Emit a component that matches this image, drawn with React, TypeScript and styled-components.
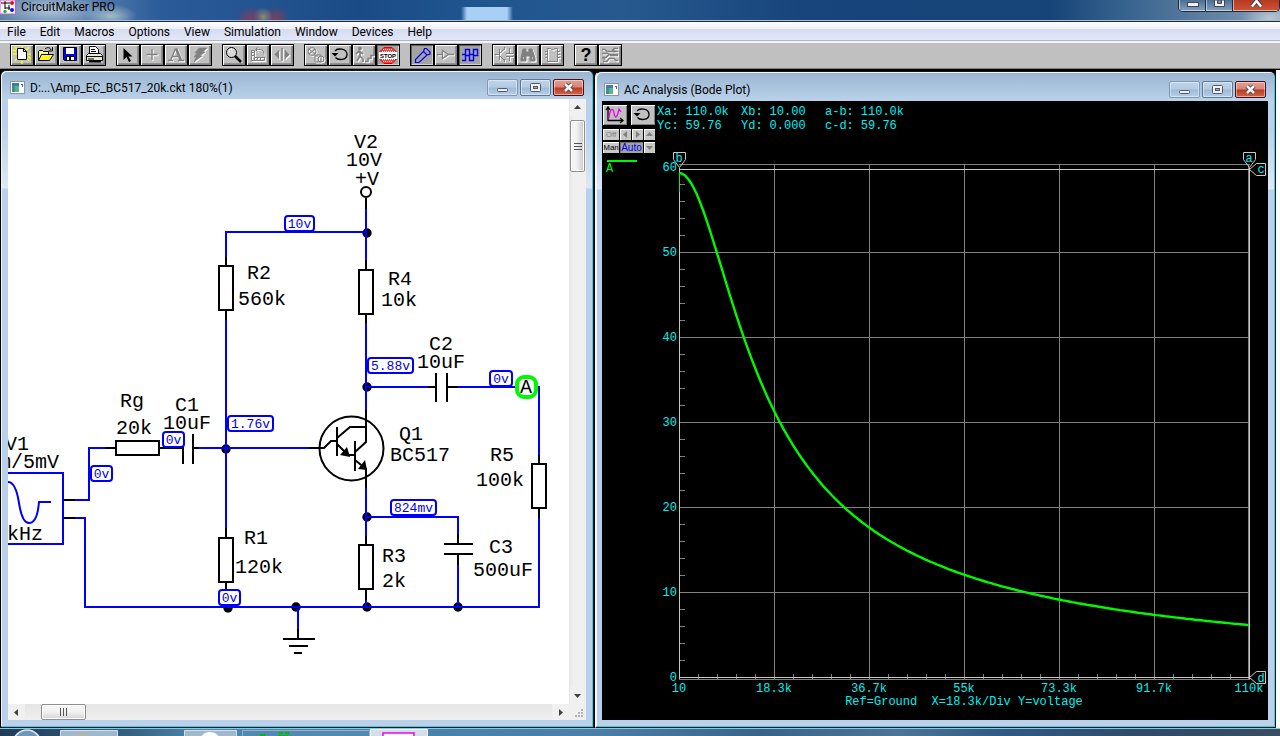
import React from "react";
import styled, { createGlobalStyle, css } from "styled-components";

const Global = createGlobalStyle`
  *, *::before, *::after { box-sizing: border-box; }
  html, body { margin: 0; padding: 0; }
  body { background: #fff; font-family: Roboto, "Open Sans", sans-serif; color: #000; overflow: hidden; }
  button { font: inherit; color: inherit; margin: 0; padding: 0; }
  svg { display: block; }
`;

const mono = `"Liberation Mono", monospace`;

const Shell = styled.div`
  min-height: 100vh;
  display: flex;
  flex-direction: column;
`;

/* ---------- application title bar ---------- */

const TitleBar = styled.header`
  height: 22px;
  display: flex;
  align-items: flex-start;
  border-bottom: 1px solid #1d2c45;
  box-shadow: inset 0 -1px 0 #a9bcd4;
  background:
    radial-gradient(ellipse 14px 12px at 250px 18px, #8c3b55cc, #8c3b5500),
    radial-gradient(ellipse 10px 10px at 263px 17px, #a59a6dcc, #a59a6d00),
    radial-gradient(ellipse 14px 12px at 276px 18px, #8c3b55cc, #8c3b5500),
    linear-gradient(90deg, #a3cdf200 461px, #a8cff4 467px, #a8cff4 507px, #a3cdf200 513px) 0 7px no-repeat,
    radial-gradient(ellipse 26px 12px at 111px 16px, #b9cfcfcc, #b9cfcf00),
    radial-gradient(ellipse 60px 20px at 50px 10px, #b6c9deee, #9db5d100),
    radial-gradient(ellipse 30px 14px at calc(100% - 10px) 18px, #c4d3dccc, #c4d3dc00),
    linear-gradient(90deg, #56799f 0, #4a74a8 110px, #2b5c99 160px, #1b4b87 360px, #1f558f 470px, #27598f 620px, #17457c 800px, #174478 1050px, #34618d 1120px, #8299b3 100%);
`;

const AppIcon = styled.span`
  width: 16px;
  height: 14px;
  overflow: hidden;
`;

const AppName = styled.h1`
  flex: 1;
  margin: 0 0 0 5px;
  font-size: 12px;
  line-height: 14px;
  font-weight: 400;
`;

const AppButtons = styled.div`
  display: flex;
  height: 12px;
  border: 1px solid #1c2a3c;
  border-top: 0;
  border-radius: 0 0 5px 5px;
  overflow: hidden;
`;

const AppButton = styled.button<{ $close?: boolean }>`
  width: ${(p) => (p.$close ? 46 : 27)}px;
  height: 11px;
  display: flex;
  justify-content: center;
  border: 0;
  border-right: ${(p) => (p.$close ? "0" : "1px solid #1c2a3c")};
  box-shadow: inset 1px -1px 0 #ffffff88;
  background: ${(p) => (p.$close ? "linear-gradient(#b53a22, #cf5334)" : "linear-gradient(#4b6e94, #84a0bd)")};
`;

/* ---------- menu and toolbar ---------- */

const MenuBar = styled.nav`
  height: 19px;
  display: flex;
  background: linear-gradient(#fff, #eceff8 7px, #d6dcf0 7px, #e2e7f7);
  border-bottom: 1px solid #aeb6cc;
`;

const MenuItem = styled.button`
  border: 0;
  background: none;
  padding: 1px 7px 0;
  font-size: 12px;
  line-height: 18px;
`;

const ToolBar = styled.div`
  height: 29px;
  display: flex;
  gap: 10px;
  padding: 1px 10px 0;
  border-top: 2px solid #f4f4f6;
  border-bottom: 1px solid #000;
  box-shadow: inset 0 -1px 0 #808080;
  background: #c0c0c0;
`;

const ToolGroup = styled.div`
  display: flex;
`;

const pressedLook = css`
  background: #a3a3a3;
  box-shadow: inset 1px 1px 0 #606060, inset -1px -1px 0 #d0d0d0;
`;

const ToolButton = styled.button<{ $pressed?: boolean }>`
  width: 24px;
  height: 22px;
  border: 1px solid #000;
  background: #c0c0c0;
  box-shadow: inset 1px 1px 0 #fff, inset -1px -1px 0 #808080, inset -2px -2px 0 #909090;
  ${(p) => p.$pressed && pressedLook}
`;

/* ---------- child windows ---------- */

const Workspace = styled.main`
  flex: 1;
  display: grid;
  grid-template-columns: 594fr 681fr;
  gap: 1px;
  border-right: 4px solid #fff;
  background: #000;
`;

const Frame = styled.section<{ $lower?: boolean }>`
  display: flex;
  flex-direction: column;
  min-width: 0;
  margin-top: ${(p) => (p.$lower ? 1 : 0)}px;
  padding: 0 7px 7px ${(p) => (p.$lower ? 6 : 7)}px;
  border: 1px solid #12161c;
  border-left-color: ${(p) => (p.$lower ? "#fff" : "#000")};
  border-radius: 6px 6px 0 0;
  box-shadow: inset -1px -1px 0 #35d0e6, inset 1px 1px 0 #f2f7fc;
  background: linear-gradient(#9ab5d1, #b9d1ea 28px, #b9d1ea 56px, #dde8f5 117px, #b9d1ea 118px);
`;

const FrameTitle = styled.header<{ $lower?: boolean }>`
  height: ${(p) => (p.$lower ? 29 : 28)}px;
  display: flex;
  align-items: center;
  gap: 2px;
  padding: ${(p) => (p.$lower ? 6 : 5)}px 2px 0;
`;

const FrameName = styled.h2`
  flex: 1;
  margin: 0 0 0 3px;
  font-size: 12px;
  line-height: 16px;
  font-weight: 400;
`;

const FrameButton = styled.button<{ $kind: string }>`
  width: 31px;
  height: 17px;
  display: grid;
  place-items: center;
  border-radius: 2px;
  border: 1px solid ${(p) => (p.$kind === "Close" ? "#48121a" : p.$kind === "Minimize" ? "#7f97b3" : "#5c7693")};
  box-shadow: inset 0 0 0 1px #ffffff70;
  background: ${(p) =>
    p.$kind === "Close"
      ? "linear-gradient(#e3a094, #d98475 7px, #b93b21 8px, #d0694f)"
      : "linear-gradient(#bfd3e8, #b5cbe3 7px, #9fbad6 8px, #b6cee8)"};
`;

const Client = styled.div`
  flex: 1;
  display: grid;
  grid-template: minmax(0, 1fr) 16px / minmax(0, 1fr) 17px;
  background: #fff;
`;

const Canvas = styled.div`
  overflow: hidden;
`;

const ScrollBar = styled.div<{ $across?: boolean }>`
  display: flex;
  flex-direction: ${(p) => (p.$across ? "row" : "column")};
  align-items: stretch;
  padding: ${(p) => (p.$across ? "0" : "0 1px")};
  background: ${(p) => (p.$across ? "linear-gradient(#e4e4e4, #f0f0f0)" : "linear-gradient(90deg, #e4e4e4, #f0f0f0 4px)")};
`;

const ScrollArrow = styled.button<{ $across?: boolean }>`
  width: ${(p) => (p.$across ? "17px" : "auto")};
  height: ${(p) => (p.$across ? "auto" : "17px")};
  display: grid;
  place-items: center;
  border: 0;
  background: #f0f0f0;
`;

const Thumb = styled.div<{ $across?: boolean }>`
  display: grid;
  place-items: center;
  border: 1px solid #8f8f8f;
  border-radius: 2px;
  box-shadow: inset 0 0 0 1px #fff;
  ${(p) =>
    p.$across
      ? css`width: 45px; margin-left: 16px; background: linear-gradient(#f4f4f4 45%, #d4d4d8);`
      : css`height: 52px; margin-top: 4px; background: linear-gradient(90deg, #f4f4f4 40%, #c9c9cf);`}
`;

const Spacer = styled.div`
  flex: 1;
`;

const GripCorner = styled.div`
  display: flex;
  align-items: flex-end;
  justify-content: flex-end;
  padding: 2px;
  background: #f0f0f0;
`;

/* ---------- plot window ---------- */

const PlotClient = styled.div`
  flex: 1;
  display: flex;
  flex-direction: column;
  background: #000;
`;

const PlotHeader = styled.div`
  height: 51px;
  display: flex;
  gap: 2px;
  padding: 4px 0 0 1px;
`;

const PlotControls = styled.div`
  width: 52px;
  display: flex;
  flex-direction: column;
  gap: 2px;
`;

const ControlRow = styled.div<{ $main?: boolean }>`
  display: flex;
  justify-content: space-between;
  margin-bottom: ${(p) => (p.$main ? 2 : 0)}px;
`;

const BigButton = styled.button`
  width: 24px;
  height: 20px;
  border: 0;
  background: #c0c0c0;
  box-shadow: inset 1px 1px 0 #fff, inset -1px -1px 0 #808080;
`;

const SmallButton = styled.button<{ $w: number; $tone?: string }>`
  width: ${(p) => p.$w}px;
  height: 11px;
  display: flex;
  align-items: center;
  justify-content: center;
  border: 0;
  overflow: hidden;
  background: ${(p) => (p.$tone === "on" ? "#a3a3a3" : "#c8c8c8")};
  box-shadow: inset 1px 1px 0 ${(p) => (p.$tone === "on" ? "#707070" : "#fff")};
  color: ${(p) => (p.$tone === "on" ? "#0000f0" : p.$tone === "off" ? "#808080" : "#000")};
  font-family: "Liberation Sans", sans-serif;
  font-size: ${(p) => (p.$tone === "on" ? 10 : 8)}px;
  line-height: 11px;
`;

const Readouts = styled.dl`
  display: grid;
  grid-template-columns: repeat(3, 84px);
  grid-auto-rows: 14px;
  margin: 0;
  color: #00f0f0;
  font-family: ${mono};
  font-size: 12px;
  line-height: 14px;
`;

const Readout = styled.div`
  display: flex;
  gap: 7px;
  dt, dd { margin: 0; }
`;

const PlotArea = styled.div`
  flex: 1;
  svg { width: 100%; height: auto; }
`;

const PlotText = styled.text<{ $trace?: boolean }>`
  font-family: ${mono};
  font-size: 12px;
  fill: ${(p) => (p.$trace ? "#00f800" : "#00f0f0")};
`;

/* ---------- schematic text ---------- */

const PartText = styled.text`
  font-family: ${mono};
  font-size: 20px;
  fill: #000;
`;

const TagText = styled.text`
  font-family: ${mono};
  font-size: 13px;
  fill: #0000f8;
`;

/* ---------- taskbar ---------- */

const TaskBar = styled.footer`
  height: 8px;
  overflow: hidden;
  border-top: 1px solid #a4bdd2;
  background: linear-gradient(90deg, #1f3b57, #35617f 130px, #4d87ad 200px, #4683ab 350px, #4a7fa8 600px, #386389 760px, #4c7496 900px, #2f5a85 1000px, #2f4a68 1150px, #394d62);
`;

/* ---------- icons ---------- */

const G = "#808080";

/* Disabled tools show a white copy one pixel down and right of the grey drawing. */
const Etched = ({ children }: { children: React.ReactNode }) => (
  <>
    <g transform="translate(1 1)" stroke="#fff" color="#fff" fill="none">{children}</g>
    <g stroke={G} color={G} fill="none">{children}</g>
  </>
);

const icons: Record<string, React.ReactNode> = {
  New: (
    <>
      <path d="M11 0v3M4 2l3 3M18 2l-3 3M2 9h4M16 9h4M4 16l3-3M18 16l-3-3M11 16v3M2 5l3 1M20 13l-3-1" stroke="#ffff00" strokeWidth="1.6" />
      <path d="M6.500 3.500h6l3 3v8h-9z" fill="#fff" stroke="#000" />
      <path d="M12.500 3.500v3h3" fill="none" stroke="#000" />
    </>
  ),
  Open: (
    <>
      <path d="M3.500 15.500v-9l1-1h3l1 1h5v3" fill="#ffff80" stroke="#000" />
      <path d="M3.500 15.500l3-6h12l-4 6z" fill="#ffff00" stroke="#000" />
      <path d="M10 4c2-2 5-2 6 1M17.500 2v4h-4" fill="none" stroke="#000" />
    </>
  ),
  Save: (
    <>
      <path d="M4.500 2.500h13v13h-12l-1-1z" fill="#0000e0" stroke="#000" />
      <path d="M7 3h8v6H7z" fill="#fff" />
      <path d="M7 11h8v5H7z" fill="#000" /><path d="M8 12h2v3H8zM12 12h3v3h-3z" fill="#fff" />
    </>
  ),
  Print: (
    <>
      <path d="M6.500 9.500v-8h6l3 3v5z" fill="#fff" stroke="#000" />
      <path d="M8 4.500h4M8 6.500h5" stroke="#000" />
      <path d="M3.500 10.500l2-2h12l2 2v5h-16z" fill="#e8e8e8" stroke="#000" />
      <path d="M4 11.500h15M5 14h6" stroke="#000" /><path d="M4 12.500h14" stroke="#ffff00" />
      <path d="M6 16.500h12" stroke="#000" strokeWidth="2" />
    </>
  ),
  Select: <path d="M6.500 3v12l3-3 2.500 5 2-1-2.500-4.500h4z" fill="#000" />,
  Wire: <Etched><path d="M11 4v11M5.500 9.500h11" strokeWidth="1.300" /></Etched>,
  Text: (
    <Etched>
      <path d="M3 15.500h5M13 15.500h6M5.500 15.500L10.500 3.500M7.500 11.500h6" strokeWidth="1.300" />
      <path d="M11 3.500L16 15.500" strokeWidth="2.600" />
    </Etched>
  ),
  Delete: <Etched><path d="M10 3h8l-4 4h2l-5 4h2l-8 6 2-5H5l3-4H6z" fill="currentColor" strokeWidth="0.500" /></Etched>,
  Zoom: (
    <>
      <circle cx="8.500" cy="7.500" r="5" fill="#d8d8d8" stroke="#000" />
      <path d="M6 7c0-2 1-3 3-3" fill="none" stroke="#fff" /><path d="M12 11l6 6" stroke="#000" strokeWidth="2.500" />
    </>
  ),
  Rotate: (
    <Etched>
      <path d="M4.500 15.500v-10h3v10zM4.500 15.500h13v-3h-10M4 7.500h3M4 10.500h3M10.500 12v3M13.500 12v3M9 4.500h4c3 0 4 2 4 5M10.500 2.500l-2 2 2 2" />
    </Etched>
  ),
  Mirror: <Etched><path d="M11 3v13" strokeWidth="1.500" /><path d="M8 5v9L3.500 9.500zM14 5v9l4.500-4.500z" fill="currentColor" strokeWidth=".3" /></Etched>,
  Probes: (
    <Etched>
      <circle cx="7" cy="6.500" r="4" /><path d="M4 4l6 5M4 9l6-5M10 10h6v7h-6zM10 11h3" /><circle cx="16" cy="14" r="3" />
    </Etched>
  ),
  Reset: (
    <>
      <path d="M6 6c2-3 12-3 12 3.500 0 6-9 6-11.500 3" fill="none" stroke="#000" strokeWidth="1.300" />
      <path d="M2.500 8h7L6 11.500z" fill="#000" />
    </>
  ),
  Step: (
    <Etched>
      <circle cx="7" cy="3.500" r="1.500" fill="currentColor" />
      <path d="M7 6v5l3 3v3M7 11l-3 5M3 9l3-3 4 3M12 16.500h3v-3h3v-3h3" strokeWidth="1.600" />
    </Etched>
  ),
  Stop: (
    <>
      <path d="M7 2.500h8l4.500 4.500v7l-4.500 4.500H7L2.500 14V7z" fill="#f04040" stroke="#e00000" />
      <path d="M6 4.500h10M5 6.500h13M5 14.500h13M6 16.500h10" stroke="#fff" strokeDasharray="1 1" />
      <path d="M2 7h18v7H2z" fill="#fff" />
      <text x="11" y="13" textAnchor="middle" fontFamily="Liberation Sans, sans-serif" fontWeight="700" fontSize="6">STOP</text>
    </>
  ),
  Probe: <path d="M4.500 17.500v-3l8-8 1-3h2l3.500 3.500v2l-3 1-8 7.500zM12.500 6.500l3.500 3.500" fill="none" stroke="#0000f0" strokeWidth="1.200" />,
  Logic: <Etched><path d="M2 9.500h5M14 9.500h5M7.500 5.500v8l6-4z" strokeWidth="1.300" /></Etched>,
  Waves: (
    <path
      d="M3 9.500h3.500v-5h4v5h4v-5h4v5M3 15.500h3.500v-5h4v5h4v-5h5"
      fill="none" stroke="#0000f0" strokeWidth="1.400"
    />
  ),
  Parts: <Etched><path d="M2 9.500h4M6.500 4v11M7 8l4-4M7 11l4 4M11.500 2v3M11.500 14v3M13 8.500h7M13 11.500h7M16.500 3v5M16.500 12v4" /></Etched>,
  Find: (
    <Etched>
      <path d="M6 4h3v3h3V4h3l3 9v3h-5v-5H9v5H4v-3z" fill="currentColor" /><path d="M6 13h1M15 13h1" stroke="#fff" />
    </Etched>
  ),
  Chip: <Etched><path d="M6.500 3.500h3l1 1h2l1-1h3v13h-10zM4 6.500h2M4 9.500h2M4 12.500h2M17 6.500h2M17 9.500h2M17 12.500h2" /></Etched>,
  Help: (
    <text x="11" y="16" textAnchor="middle" fontFamily="Liberation Sans, sans-serif" fontWeight="700" fontSize="18">?</text>
  ),
  Board: (
    <Etched>
      <path d="M3 4.500h3l2 2h5l2-3h4M3 8.500h6l3 2h7M3 12.500h4l3-3h9M4 16.500h4l2-3h5l2 2h2M13 6.500h6" strokeWidth="1.500" />
      <circle cx="5" cy="14" r="1" /><circle cx="15" cy="6" r="1" />
    </Etched>
  ),
};

const toolGroups: string[][] = [
  ["New", "Open", "Save", "Print"],
  ["Select", "Wire", "Text", "Delete"],
  ["Zoom", "Rotate", "Mirror"],
  ["Probes", "Reset", "Step", "Stop"],
  ["Probe", "Logic", "Waves"],
  ["Parts", "Find", "Chip"],
  ["Help", "Board"],
];
const pressed = ["Stop", "Probe", "Waves"];

const ToolIcon = ({ name }: { name: string }) => (
  <svg width="22" height="20" viewBox="0 0 22 20">{icons[name]}</svg>
);

const WindowGlyph = ({ kind }: { kind: string }) => (
  <svg width="13" height="11" viewBox="0 0 13 11">
    {kind === "Minimize" && <rect x="1.500" y="6.500" width="10" height="3" rx="1" fill="#eee" stroke="#50586a" />}
    {kind === "Restore" && (
      <>
        <rect x="1.500" y="1.500" width="10" height="8" rx="1" fill="#f2f2f2" stroke="#50586a" />
        <rect x="4.500" y="4.500" width="4" height="2" fill="#8fb0d4" stroke="#50586a" />
      </>
    )}
    {kind === "Close" && (
      <>
        <path d="M3 2l7 7M10 2L3 9" stroke="#50434e" strokeWidth="4.500" />
        <path d="M3 2l7 7M10 2L3 9" stroke="#f4f4f4" strokeWidth="2.500" />
      </>
    )}
  </svg>
);

const DocIcon = () => (
  <svg width="15" height="13" viewBox="0 0 15 13" aria-hidden="true">
    <rect x=".5" y=".5" width="14" height="12" fill="#fff" stroke="#8b95a3" />
    <path d="M2 2h7v9H2z" fill="#3f8f8c" /><path d="M5 5h4v6H5z" fill="#57b58a" />
    <path d="M2 2h7v3H2z" fill="#4779a8" /><path d="M11 3.500h2M12.500 3v3" stroke="#3c6ba5" />
  </svg>
);

const frameKinds = ["Minimize", "Restore", "Close"];

const FrameHeader = ({ title, lower }: { title: string; lower?: boolean }) => (
  <FrameTitle $lower={lower}>
    <DocIcon />
    <FrameName>{title}</FrameName>
    {frameKinds.map((k) => (
      <FrameButton key={k} $kind={k} aria-label={k}><WindowGlyph kind={k} /></FrameButton>
    ))}
  </FrameTitle>
);

/* ---------- schematic ---------- */

const partLabels: [number, number, string][] = [
  [354, 148, "V2"], [346, 166, "10V"], [355, 185, "+V"],
  [247, 279, "R2"], [238, 305, "560k"], [388, 285, "R4"], [381, 306, "10k"],
  [429, 350, "C2"], [417, 368, "10uF"], [120, 407, "Rg"], [116, 434, "20k"],
  [175, 411, "C1"], [163, 429, "10uF"], [399, 440, "Q1"], [390, 461, "BC517"],
  [490, 461, "R5"], [476, 486, "100k"], [244, 544, "R1"], [235, 573, "120k"],
  [382, 562, "R3"], [382, 587, "2k"], [489, 553, "C3"], [473, 576, "500uF"],
  [5, 450, "V1"], [-1, 468, "m/5mV"], [7, 540, "kHz"],
];

const tags: [number, number, number, string][] = [
  [285, 216, 29, "10v"], [368, 358, 45, "5.88v"], [490, 371, 22, "0v"],
  [228, 416, 45, "1.76v"], [163, 432, 21, "0v"], [91, 466, 21, "0v"],
  [391, 500, 45, "824mv"], [219, 590, 21, "0v"],
];

const dots = [[367, 233], [367, 387], [226, 449], [367, 517], [228, 608], [296, 607], [367, 607], [458, 607]];
const tallResistors = [[219, 266], [359, 270], [532, 464], [219, 538], [359, 545]];

const Schematic = () => (
  <svg width="561" height="605" viewBox="8 99 561 605" role="img" aria-label="Amplifier schematic">
    <g fill="#000">{dots.map(([x, y]) => <circle key={`${x}-${y}`} cx={x} cy={y} r="4.700" />)}</g>
    <g fill="none" stroke="#0000f8" strokeWidth="2">
      <path d="M226 257V232H366M366 209V260M366 323V410M226 320V528M367 387H428M458 387H539V455M539 518V607H85V518H75" />
      <path d="M75 500H89V448H105M199 448H309M366 488V536M367 517H458V534M458 565V607M366 600V607M298 608V629" />
      <path d="M0 473H63V544H0M8 482C14 482 17 490 19 503C21 516 24 523 29 523C35 523 38 514 39 502H51" />
    </g>
    <g fill="none" stroke="#000" strokeWidth="2">
      <path d="M226 257V265M226 311V320M366 198V209M366 260V269M366 313V323M226 528V537M226 581V590M366 536V544M366 589V600M539 455V463M539 508V518" />
      <path d="M64 500H75M64 518H75M105 448H115M160 448H183M183 434V464M193 434V464M193 448H199M428 387H436M436 373V402M447 373V402M447 387H458" />
      <path d="M458 534V544M444 544H473M444 554H473M458 554V565M298 629V639M283 639H315M289 646H308M294 653H302" />
      <circle cx="366" cy="192" r="5" fill="#fff" />
      <circle cx="351.500" cy="448.500" r="32" />
      <path d="M309 448H324L331 441H337M337 427V456M337 438L350 427H366M337 444L348 455H355M355 441V471M355 452L366 442V410M355 460L366 469V488" />
      {tallResistors.map(([x, y]) => <rect key={`${x}-${y}`} x={x} y={y} width="14" height="44" fill="#fff" />)}
      <rect x="116" y="441" width="43" height="14" fill="#fff" />
    </g>
    <path d="M350 457L340 455L347 447ZM367 470L358 469L365 460Z" fill="#000" />
    {tags.map(([x, y, w, t]) => (
      <g key={`${x}-${y}`}>
        <rect x={x} y={y} width={w} height="15" rx="3" fill="#fff" stroke="#0000f8" strokeWidth="2" />
        <TagText x={x + w / 2} y={y + 12} textAnchor="middle">{t}</TagText>
      </g>
    ))}
    <rect x="517" y="377" width="19" height="20" rx="7" fill="#fff" stroke="#00f800" strokeWidth="4" />
    <PartText x="526" y="393" textAnchor="middle">A</PartText>
    {partLabels.map(([x, y, t]) => <PartText key={`${x}-${y}`} x={x} y={y}>{t}</PartText>)}
  </svg>
);

/* ---------- Bode plot ---------- */

const X0 = 679, X1 = 1249, Y0 = 677, PER_VOLT = 8.5, CORNER = 11.4;
const curve = Array.from({ length: 191 }, (_, i) => {
  const f = (i / 190) * 110;
  const volts = 59.3 / Math.sqrt(1 + (f / CORNER) ** 2);
  return `${i ? "L" : "M"}${(X0 + (i / 190) * (X1 - X0)).toFixed(1)} ${(Y0 - volts * PER_VOLT).toFixed(1)}`;
}).join("");

const xLabels = ["10", "18.3k", "36.7k", "55k", "73.3k", "91.7k", "110k"];
const readouts = [
  ["Xa:", "110.0k"], ["Xb:", "10.00"], ["a-b:", "110.0k"],
  ["Yc:", "59.76"], ["Yd:", "0.000"], ["c-d:", "59.76"],
];

const BodePlot = () => (
  <svg viewBox="602 152 666 568" role="img" aria-label="Bode plot of output A" shapeRendering="crispEdges">
    <g stroke="#808080" fill="none">
      {[1, 2, 3, 4, 5].map((i) => (
        <path key={i} d={`M${X0 + i * 95 + 0.5} 164V679M${X0} ${Y0 - i * 85 + 0.5}H${X1}`} />
      ))}
      {Array.from({ length: 30 }, (_, i) => (
        <path key={i} d={`M${X0} ${Y0 - i * 17 + 0.5}h6M${X0 + i * 19 + 0.5} 674v5`} />
      ))}
      <path d="M679 164.500H1250M679 679.500H1250M1248.500 164V679" />
    </g>
    <path d="M679.500 168V679M679 169.500H1249M679 677.500H1249M1249.500 168V679" stroke="#c8c8c8" fill="none" />
    <g stroke="#c8c8c8" fill="none" shapeRendering="auto">
      <path d="M673.500 152.500h12v7l-6 8-6-8zM1243.500 152.500h12v7l-6 8-6-8zM1249.500 169.500l7-6h9v12h-9zM1249.500 677.500l7-6h9v12h-9z" />
    </g>
    <path d="M679.500 174v18" stroke="#00f800" />
    <path d={curve} fill="none" stroke="#00f800" strokeWidth="2.400" shapeRendering="auto" />
    <path d="M607 161h30" stroke="#00f800" strokeWidth="2" />
    <PlotText x="606" y="172" $trace>A</PlotText>
    {[0, 10, 20, 30, 40, 50, 60].map((v) => (
      <PlotText key={v} x="677" y={Y0 + 4 - v * PER_VOLT} textAnchor="end">{v}</PlotText>
    ))}
    {xLabels.map((t, i) => <PlotText key={t} x={X0 + i * 95} y="692" textAnchor="middle">{t}</PlotText>)}
    <PlotText x="964" y="705" textAnchor="middle">{"Ref=Ground\u00a0 X=18.3k/Div Y=voltage"}</PlotText>
    <PlotText x="679" y="162" textAnchor="middle">b</PlotText>
    <PlotText x="1249" y="162" textAnchor="middle">a</PlotText>
    <PlotText x="1261" y="173" textAnchor="middle">c</PlotText>
    <PlotText x="1261" y="682" textAnchor="middle">d</PlotText>
  </svg>
);

const Arrow = ({ d, size = 9, fill = "#404040" }: { d: string; size?: number; fill?: string }) => (
  <svg width={size} height={size} viewBox="0 0 9 9"><path d={d} fill={fill} /></svg>
);
const LEFT = "M6 1v7L2 4.500z", RIGHT = "M3 1v7l4-3.500z", UP = "M1 6h7L4.500 2z", DOWN = "M1 3h7L4.500 7z";

const menus = ["File", "Edit", "Macros", "Options", "View", "Simulation", "Window", "Devices", "Help"];

export default function App() {
  return (
    <Shell>
      <Global />
      <TitleBar>
        <AppIcon>
          <svg width="16" height="16" viewBox="0 0 16 16">
            <path d="M0 0h15.500v14H0z" fill="#fff" stroke="#f040f0" />
            <path d="M1 3h4M5 1v8M5 3h5M5 8h5M9 5v5" stroke="#000" fill="none" />
            <circle cx="12" cy="3" r="2" fill="#e01010" /><circle cx="12" cy="10" r="2" fill="#1010e0" />
            <circle cx="5" cy="11.500" r="1.700" fill="#10c010" />
          </svg>
        </AppIcon>
        <AppName>CircuitMaker PRO</AppName>
        <AppButtons>
          <AppButton aria-label="Minimize">
            <svg width="13" height="8"><rect x="1.500" y="2.500" width="11" height="4" fill="#f2f2f2" stroke="#445" /></svg>
          </AppButton>
          <AppButton aria-label="Restore">
            <svg width="13" height="8"><path d="M1.500 0v6.500h10V0z" fill="#f2f2f2" stroke="#445" /><path d="M4.500 0v3.500h4V0z" fill="#6f8cad" stroke="#445" /></svg>
          </AppButton>
          <AppButton $close aria-label="Close">
            <svg width="13" height="8"><path d="M2 6L6.500 1 11 6" fill="none" stroke="#434050" strokeWidth="4.500" /><path d="M2 6.500L6.500 1 11 6.500" fill="none" stroke="#fff" strokeWidth="2.500" /></svg>
          </AppButton>
        </AppButtons>
      </TitleBar>
      <MenuBar>{menus.map((m) => <MenuItem key={m}>{m}</MenuItem>)}</MenuBar>
      <ToolBar role="toolbar">
        {toolGroups.map((g) => (
          <ToolGroup key={g[0]}>
            {g.map((n) => (
              <ToolButton key={n} $pressed={pressed.includes(n)} aria-label={n}><ToolIcon name={n} /></ToolButton>
            ))}
          </ToolGroup>
        ))}
      </ToolBar>
      <Workspace>
        <Frame>
          <FrameHeader title="D:...\Amp_EC_BC517_20k.ckt 180%(1)" />
          <Client>
            <Canvas><Schematic /></Canvas>
            <ScrollBar>
              <ScrollArrow aria-label="Scroll up"><Arrow d={UP} /></ScrollArrow>
              <Thumb><svg width="8" height="9"><path d="M0 1.500h8M0 4.500h8M0 7.500h8" stroke="#555" /></svg></Thumb>
              <Spacer />
              <ScrollArrow aria-label="Scroll down"><Arrow d={DOWN} /></ScrollArrow>
            </ScrollBar>
            <ScrollBar $across>
              <ScrollArrow $across aria-label="Scroll left"><Arrow d={LEFT} /></ScrollArrow>
              <Thumb $across><svg width="9" height="8"><path d="M1.500 0v8M4.500 0v8M7.500 0v8" stroke="#555" /></svg></Thumb>
              <Spacer />
              <ScrollArrow $across aria-label="Scroll right"><Arrow d={RIGHT} /></ScrollArrow>
            </ScrollBar>
            <GripCorner>
              <svg width="9" height="9"><path d="M6 0h2v2H6zM3 3h2v2H3zM6 3h2v2H6zM0 6h2v2H0zM3 6h2v2H3zM6 6h2v2H6z" fill="#b4b4b4" /></svg>
            </GripCorner>
          </Client>
        </Frame>
        <Frame $lower>
          <FrameHeader title="AC Analysis (Bode Plot)" lower />
          <PlotClient>
            <PlotHeader>
              <PlotControls>
                <ControlRow $main>
                  <BigButton aria-label="Scale axes">
                    <svg width="24" height="20" viewBox="0 0 24 20">
                      <path d="M5 3v12.500h14M3 5l2-3 2 3M17 13l3 2.500-3 2.500" fill="none" stroke="#000" strokeWidth="1.300" />
                      <path d="M6 13c1-10 4-11 5-5s3 6 5-4l2 3" fill="none" stroke="#f000f0" strokeWidth="1.300" />
                    </svg>
                  </BigButton>
                  <BigButton aria-label="Reset plot"><ToolIcon name="Reset" /></BigButton>
                </ControlRow>
                <ControlRow>
                  <SmallButton $w={16} $tone="off">Off</SmallButton>
                  <SmallButton $w={11} aria-label="Left"><Arrow d={LEFT} fill={G} /></SmallButton>
                  <SmallButton $w={11} aria-label="Right"><Arrow d={RIGHT} fill={G} /></SmallButton>
                  <SmallButton $w={11} aria-label="Up"><Arrow d={UP} fill={G} /></SmallButton>
                </ControlRow>
                <ControlRow>
                  <SmallButton $w={16}>Man</SmallButton>
                  <SmallButton $w={23} $tone="on">Auto</SmallButton>
                  <SmallButton $w={11} aria-label="Down"><Arrow d={DOWN} fill={G} /></SmallButton>
                </ControlRow>
              </PlotControls>
              <Readouts>
                {readouts.map(([k, v]) => <Readout key={k}><dt>{k}</dt><dd>{v}</dd></Readout>)}
              </Readouts>
            </PlotHeader>
            <PlotArea><BodePlot /></PlotArea>
          </PlotClient>
        </Frame>
      </Workspace>
      <TaskBar>
        <svg width="430" height="8" viewBox="0 0 430 8" aria-hidden="true">
          <circle cx="27" cy="15" r="14" fill="#6f97b5" stroke="#dbe8f2" strokeWidth="1.500" />
          <path d="M60.500 8V1.500h57V8zM184.500 8V1.500h52V8z" fill="#9fb8cb" stroke="#d3e0ea" />
          <path d="M242.500 8V1.500h127V8" fill="#5189b0" stroke="#8fb2cb" />
          <path d="M370.500 8V.5h57V8z" fill="#d4dee6" stroke="#f0f4f7" />
          <circle cx="210" cy="14" r="11" fill="#fff" /><ellipse cx="82" cy="8" rx="7" ry="2" fill="#dcb264" />
          <path d="M260 6h5M279 4h4M285 4h4M278 7h10" stroke="#08b808" strokeWidth="2" />
          <path d="M383 9V4h31v5z" fill="#fff" stroke="#f000f0" strokeWidth="1.500" />
        </svg>
      </TaskBar>
    </Shell>
  );
}
